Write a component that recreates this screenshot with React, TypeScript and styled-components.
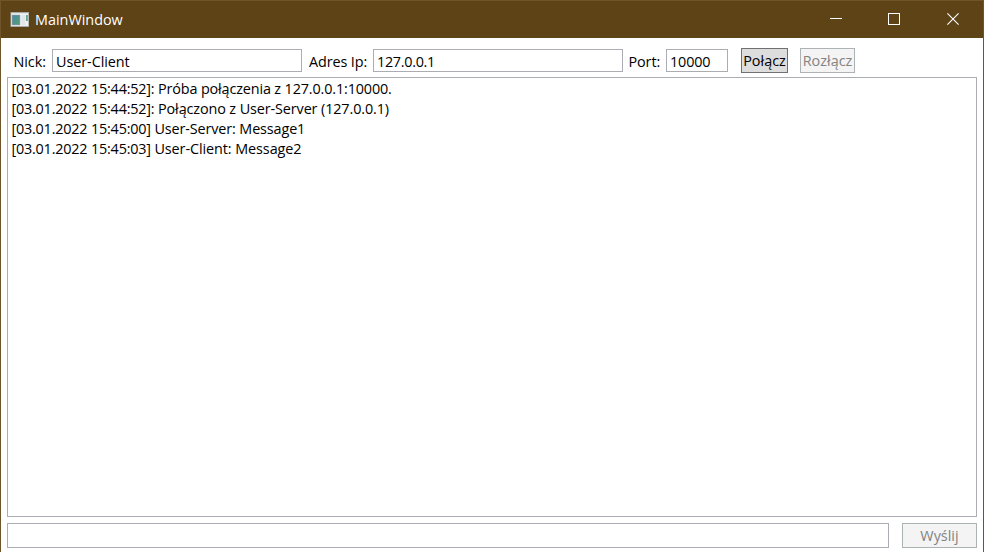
import React from "react";
import styled, { createGlobalStyle } from "styled-components";

const GlobalStyle = createGlobalStyle`
  * { box-sizing: border-box; }
  body { margin: 0; background: #fff; }
`;

const Window = styled.div`
  width: 984px;
  height: 552px;
  display: flex;
  flex-direction: column;
  overflow: hidden;
  border: 1px solid #70542a;
  border-bottom: 0;
  background: #fff;
  color: #000;
  font-family: "Open Sans", "Noto Sans", sans-serif;
  font-size: 14.4px;
  line-height: 20px;
`;

const TitleBar = styled.header`
  height: 37px;
  flex: none;
  display: flex;
  align-items: center;
  background: #5e4317;
  color: #fff;
  padding-left: 9px;
`;

const Text = styled.span<{ $spacing?: number }>`
  white-space: pre;
  letter-spacing: ${(p) => p.$spacing ?? 0}px;
`;

const Title = styled.h1`
  margin: 0 auto 0 5px;
  font-size: 14.4px;
  font-weight: 400;
  line-height: 20px;
`;

const CaptionButton = styled.button<{ $width: number }>`
  width: ${(p) => p.$width}px;
  height: 37px;
  padding: 0 0 1px;
  border: 0;
  background: transparent;
  display: flex;
  align-items: center;
  justify-content: center;
`;

const Toolbar = styled.form`
  display: flex;
  align-items: center;
  height: 25px;
  margin: 10px 0 4px;
  flex: none;
`;

const Label = styled.label<{ $width: number; $indent: number }>`
  width: ${(p) => p.$width}px;
  padding-left: ${(p) => p.$indent}px;
  padding-top: 2px;
  flex: none;
`;

const Field = styled.input<{ $width: number; $spacing?: number }>`
  width: ${(p) => p.$width}px;
  height: 23px;
  flex: none;
  margin: 0;
  padding: 2px 3px 0;
  border: 1px solid #abadb3;
  border-radius: 0;
  outline: 0;
  background: #fff;
  color: #000;
  font: inherit;
  letter-spacing: ${(p) => p.$spacing ?? 0}px;
`;

const Button = styled.button<{ $width: number; $gap: number }>`
  width: ${(p) => p.$width}px;
  height: 25px;
  flex: none;
  margin: 0 0 0 ${(p) => p.$gap}px;
  padding: 1px 0 0;
  border: 1px solid #707070;
  border-radius: 0;
  background: #ddd;
  color: #000;
  font: inherit;
  display: flex;
  justify-content: center;
  align-items: center;
  &:disabled {
    border-color: #adb2b5;
    background: #f4f4f4;
    color: #838383;
  }
`;

const Log = styled.ul`
  list-style: none;
  width: 970px;
  height: 440px;
  flex: none;
  margin: 0 0 0 6px;
  padding: 1px 0 0 3.4px;
  border: 1px solid #abadb3;
`;

const LogLine = styled.li`
  height: 20px;
`;

const Composer = styled.form`
  display: flex;
  flex: none;
  margin: 6px 0 0 6px;
`;

const MessageField = styled(Field)`
  height: 25px;
`;

const AppIcon = () => (
  <svg width="20" height="16" viewBox="0 0 20 16">
    <defs>
      <linearGradient id="pane" x1="0" y1="0" x2="1" y2="1">
        <stop offset="0" stopColor="#4a86ab" />
        <stop offset="1" stopColor="#55a070" />
      </linearGradient>
    </defs>
    <rect x="0.5" y="0" width="18.5" height="15" fill="#a9a9a5" />
    <rect x="1.2" y="1.2" width="17" height="12.8" fill="#f2f3f5" />
    <rect x="1.8" y="2.8" width="8.4" height="10.4" fill="#8298a0" />
    <rect x="2.6" y="3.4" width="6.8" height="9" fill="url(#pane)" />
    <rect x="11.5" y="3" width="4" height="10.5" fill="#e5e5e9" />
    <rect x="16" y="3" width="1.8" height="6" fill="#5fa58a" />
  </svg>
);

const lines = [
  { stamp: "[03.01.2022 15:44:52]: ", text: "Próba połączenia z 127.0.0.1:10000.", spacing: -0.14 },
  { stamp: "[03.01.2022 15:44:52]: ", text: "Połączono z User-Server (127.0.0.1)", spacing: -0.11 },
  { stamp: "[03.01.2022 15:45:00] ", text: "User-Server: Message1", spacing: -0.12 },
  { stamp: "[03.01.2022 15:45:03] ", text: "User-Client: Message2", spacing: -0.08 },
];

export default function App() {
  return (
    <>
      <GlobalStyle />
      <Window>
        <TitleBar>
          <AppIcon />
          <Title><Text>MainWindow</Text></Title>
          <CaptionButton $width={58} aria-label="Minimize">
            <svg width="12" height="12"><path d="M0 5.5H12" stroke="#fff" /></svg>
          </CaptionButton>
          <CaptionButton $width={58} aria-label="Maximize">
            <svg width="12" height="12"><rect x=".5" y=".5" width="11" height="11" fill="none" stroke="#fff" /></svg>
          </CaptionButton>
          <CaptionButton $width={60} aria-label="Close">
            <svg width="12" height="12"><path d="M.4 .4L11.6 11.6M11.6 .4L.4 11.6" stroke="#fff" strokeWidth="1.1" /></svg>
          </CaptionButton>
        </TitleBar>
        <Toolbar>
          <Label $width={51} $indent={12.4}><Text>Nick:</Text></Label>
          <Field $width={250} $spacing={-0.06} defaultValue="User-Client" />
          <Label $width={71} $indent={7}><Text $spacing={-0.1}>Adres Ip:</Text></Label>
          <Field $width={250} $spacing={-0.3} defaultValue="127.0.0.1" />
          <Label $width={43} $indent={5.5}><Text $spacing={-0.1}>Port:</Text></Label>
          <Field $width={62} $spacing={-0.16} defaultValue="10000" />
          <Button $width={47} $gap={13} type="button"><Text>Połącz</Text></Button>
          <Button $width={55} $gap={12} type="button" disabled><Text>Rozłącz</Text></Button>
        </Toolbar>
        <Log>
          {lines.map((l) => (
            <LogLine key={l.stamp + l.text}>
              <Text $spacing={-0.19}>{l.stamp}</Text>
              <Text $spacing={l.spacing}>{l.text}</Text>
            </LogLine>
          ))}
        </Log>
        <Composer>
          <MessageField $width={882} />
          <Button $width={75} $gap={13} type="button" disabled><Text>Wyślij</Text></Button>
        </Composer>
      </Window>
    </>
  );
}
